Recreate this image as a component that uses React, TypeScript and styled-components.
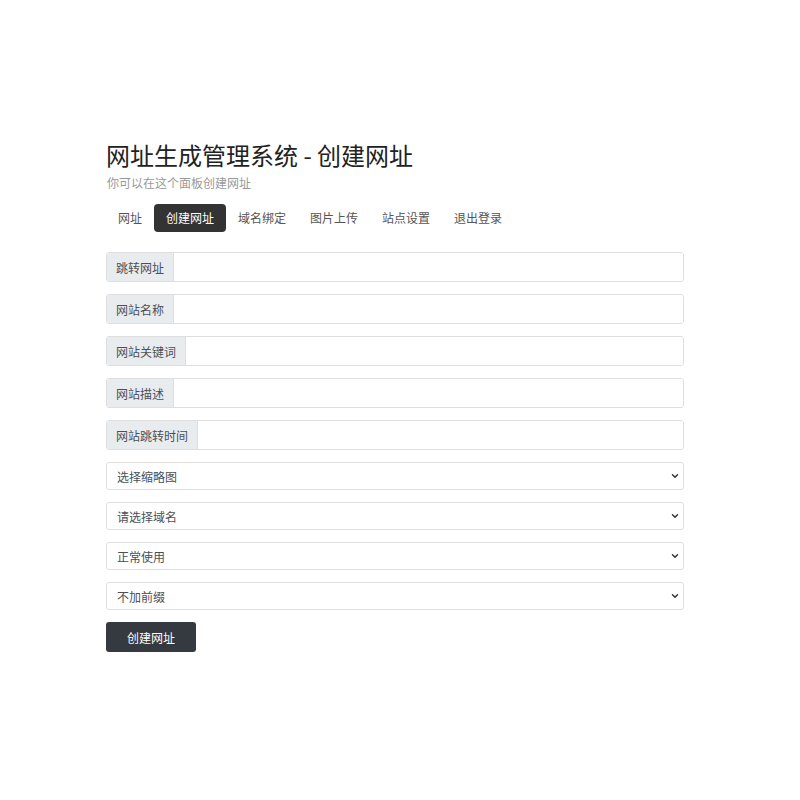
import styled, { createGlobalStyle } from "styled-components";
import { ChevronDown } from "lucide-react";

const GlobalStyle = createGlobalStyle`
  body {
    margin: 0;
    background: #fff;
    font-family: "Noto Sans CJK SC", "Noto Sans", sans-serif;
    color: #212529;
  }
`;

const Page = styled.div`
  width: 578px;
  margin-left: 106px;
  padding-top: 141px;
`;

const Title = styled.h1`
  margin: 0;
  font-size: 24px;
  font-weight: 400;
  line-height: 28px;
  color: #222;
`;

const Subtitle = styled.p`
  margin: 6px 0 0 1px;
  font-size: 12px;
  line-height: 16px;
  color: #999;
`;

const Nav = styled.nav`
  display: flex;
  margin-top: 13px;
`;

const NavItem = styled.a<{ $active?: boolean }>`
  display: block;
  padding: 7px 12px;
  font-size: 12px;
  line-height: 14px;
  border-radius: 4px;
  color: ${(props) => (props.$active ? "#fff" : "#555")};
  background: ${(props) => (props.$active ? "#333" : "transparent")};
  text-decoration: none;
  cursor: pointer;
`;

const Form = styled.form`
  display: flex;
  flex-direction: column;
  margin-top: 20px;
`;

const InputGroup = styled.div`
  display: flex;
  height: 30px;
  box-sizing: border-box;
  border: 1px solid #dedede;
  border-radius: 3px;
  margin-bottom: 12px;
  overflow: hidden;
`;

const Addon = styled.span`
  display: flex;
  align-items: center;
  padding: 0 9px;
  background: #e9ecef;
  border-right: 1px solid #dedede;
  font-size: 12px;
  color: #495057;
  white-space: nowrap;
`;

const Input = styled.input`
  flex: 1;
  border: none;
  outline: none;
  padding: 0 10px;
  font-size: 12px;
  background: #fff;
`;

const SelectWrap = styled.div`
  position: relative;
  margin-bottom: 12px;
`;

const Select = styled.select`
  display: block;
  width: 100%;
  height: 28px;
  box-sizing: border-box;
  appearance: none;
  border: 1px solid #dedede;
  border-radius: 3px;
  background: #fff;
  padding: 0 24px 0 10px;
  font-family: "Noto Sans CJK SC", "Noto Sans", sans-serif;
  font-size: 12px;
  color: #495057;
  outline: none;
`;

const Caret = styled.span`
  position: absolute;
  right: 4px;
  top: 9px;
  display: flex;
  color: #333;
  pointer-events: none;
`;

const Button = styled.button`
  align-self: flex-start;
  width: 90px;
  height: 30px;
  border: none;
  border-radius: 3px;
  background: #343a40;
  color: #fff;
  font-family: "Noto Sans CJK SC", "Noto Sans", sans-serif;
  font-size: 12px;
`;

const navItems = ["网址", "创建网址", "域名绑定", "图片上传", "站点设置", "退出登录"];
const fields = ["跳转网址", "网站名称", "网站关键词", "网站描述", "网站跳转时间"];
const selects = ["选择缩略图", "请选择域名", "正常使用", "不加前缀"];

export default function App() {
  return (
    <>
      <GlobalStyle />
      <Page>
        <Title>网址生成管理系统 - 创建网址</Title>
        <Subtitle>你可以在这个面板创建网址</Subtitle>
        <Nav>
          {navItems.map((item) => (
            <NavItem key={item} $active={item === "创建网址"}>
              {item}
            </NavItem>
          ))}
        </Nav>
        <Form onSubmit={(e) => e.preventDefault()}>
          {fields.map((label) => (
            <InputGroup key={label}>
              <Addon>{label}</Addon>
              <Input type="text" />
            </InputGroup>
          ))}
          {selects.map((option) => (
            <SelectWrap key={option}>
              <Select defaultValue={option}>
                <option value={option}>{option}</option>
              </Select>
              <Caret>
                <ChevronDown size={10} strokeWidth={3.5} />
              </Caret>
            </SelectWrap>
          ))}
          <Button type="submit">创建网址</Button>
        </Form>
      </Page>
    </>
  );
}
